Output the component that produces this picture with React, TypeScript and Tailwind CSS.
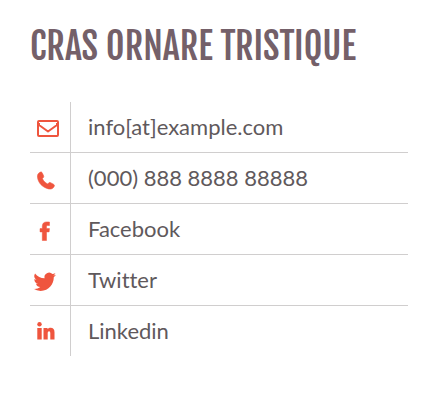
import type { ReactNode } from "react";

type Contact = { name: string; label: string; icon: ReactNode };

const contacts: Contact[] = [
  {
    name: "email",
    label: "info[at]example.com",
    icon: (
      <svg viewBox="0 0 30 26" className="h-[26px] w-[30px]" fill="none" stroke="currentColor" strokeWidth="2" strokeLinejoin="round" aria-hidden="true">
        <rect x="8" y="5" width="20" height="15" rx="1" />
        <path d="M9 7v2l9 6.500 9-6.500v-2" />
      </svg>
    ),
  },
  {
    name: "phone",
    label: "(000) 888 8888 88888",
    icon: (
      <svg viewBox="0 0 30 26" className="h-[26px] w-[30px]" fill="currentColor" stroke="currentColor" strokeWidth=".6" aria-hidden="true">
        <path d="M10 5.300c1.300-.7 1.900-.3 2.400.9l1.200 2.600c.4 1.200-.1 1.800-1.200 2.800 1.100 2.500 2.900 4.300 5.300 5.400 1-1.200 1.700-1.900 2.900-1.300l2.800 1.500c1.100.6 1.300 1.300.6 2.500-1.100 2-3.100 2.700-5.400 2.200C12.500 20.400 8.200 16 7.500 10.300 7.200 8 8 6.300 10 5.300z" />
      </svg>
    ),
  },
  {
    name: "facebook",
    label: "Facebook",
    icon: (
      <svg viewBox="0 0 30 26" className="h-[26px] w-[30px]" fill="currentColor" stroke="currentColor" strokeWidth=".5" aria-hidden="true">
        <path d="M19.500 4v3.500h-1.700c-1 0-1.300.5-1.300 1.300v1.800h3l-.4 3.300h-2.600V22.500h-4.200V13.900H10v-3.300h2.300V8.200c0-2.800 1.600-4.300 4.400-4.300z" />
      </svg>
    ),
  },
  {
    name: "twitter",
    label: "Twitter",
    icon: (
      <svg viewBox="0 0 30 26" className="h-[26px] w-[30px]" fill="currentColor" aria-hidden="true">
        <path transform="translate(3.500 1.500) scale(.94)" d="M23.950 4.570a10 10 0 0 1-2.820.780 4.960 4.960 0 0 0 2.160-2.730c-.950.560-2 .960-3.130 1.190a4.920 4.920 0 0 0-8.380 4.480C7.690 8.100 4.070 6.130 1.640 3.160a4.920 4.920 0 0 0 1.520 6.570 4.900 4.900 0 0 1-2.230-.610v.060a4.920 4.920 0 0 0 3.950 4.830 5 5 0 0 1-2.220.080 4.940 4.940 0 0 0 4.600 3.420A9.870 9.870 0 0 1 0 19.540a14 14 0 0 0 7.550 2.210c9.050 0 14-7.500 14-13.980l-.020-.640a9.940 9.940 0 0 0 2.420-2.560z" />
      </svg>
    ),
  },
  {
    name: "linkedin",
    label: "Linkedin",
    icon: (
      <svg viewBox="0 0 30 26" className="h-[26px] w-[30px]" fill="currentColor" aria-hidden="true">
        <circle cx="9.500" cy="4.300" r="2.200" />
        <path d="M7.300 8h4.400V19.500H7.300zM13.500 8h4v1.300c.7-1 1.700-1.500 3-1.500 2.800 0 4 1.600 4 4.500V19.500h-4.200v-6.200c0-1.300-.4-2-1.200-2-1 0-1.400.8-1.400 2V19.500h-4.200z" />
      </svg>
    ),
  },
];

export default function App() {
  return (
    <section className="bg-white pt-[22px] pr-[35px] pb-14 pl-[30px]">
      <h2 className="mb-[30px] whitespace-nowrap font-['Fjalla_One',sans-serif] text-[36px] leading-[50px] font-normal text-[#746069] uppercase">
        Cras ornare tristique
      </h2>
      <ul>
        {contacts.map(({ name, label, icon }) => (
          <li key={name} className="flex h-[51px] items-stretch border-b border-[#d0cece] last:border-transparent">
            <span className="flex w-[41px] items-center border-r border-[#d0cece] pt-1 text-[#ef553e]">
              {icon}
            </span>
            <span className="flex items-center pl-[17px] font-['Lato',sans-serif] text-[22px] leading-8 text-[#5f595c] [font-variant-ligatures:none]">
              {label}
            </span>
          </li>
        ))}
      </ul>
    </section>
  );
}
